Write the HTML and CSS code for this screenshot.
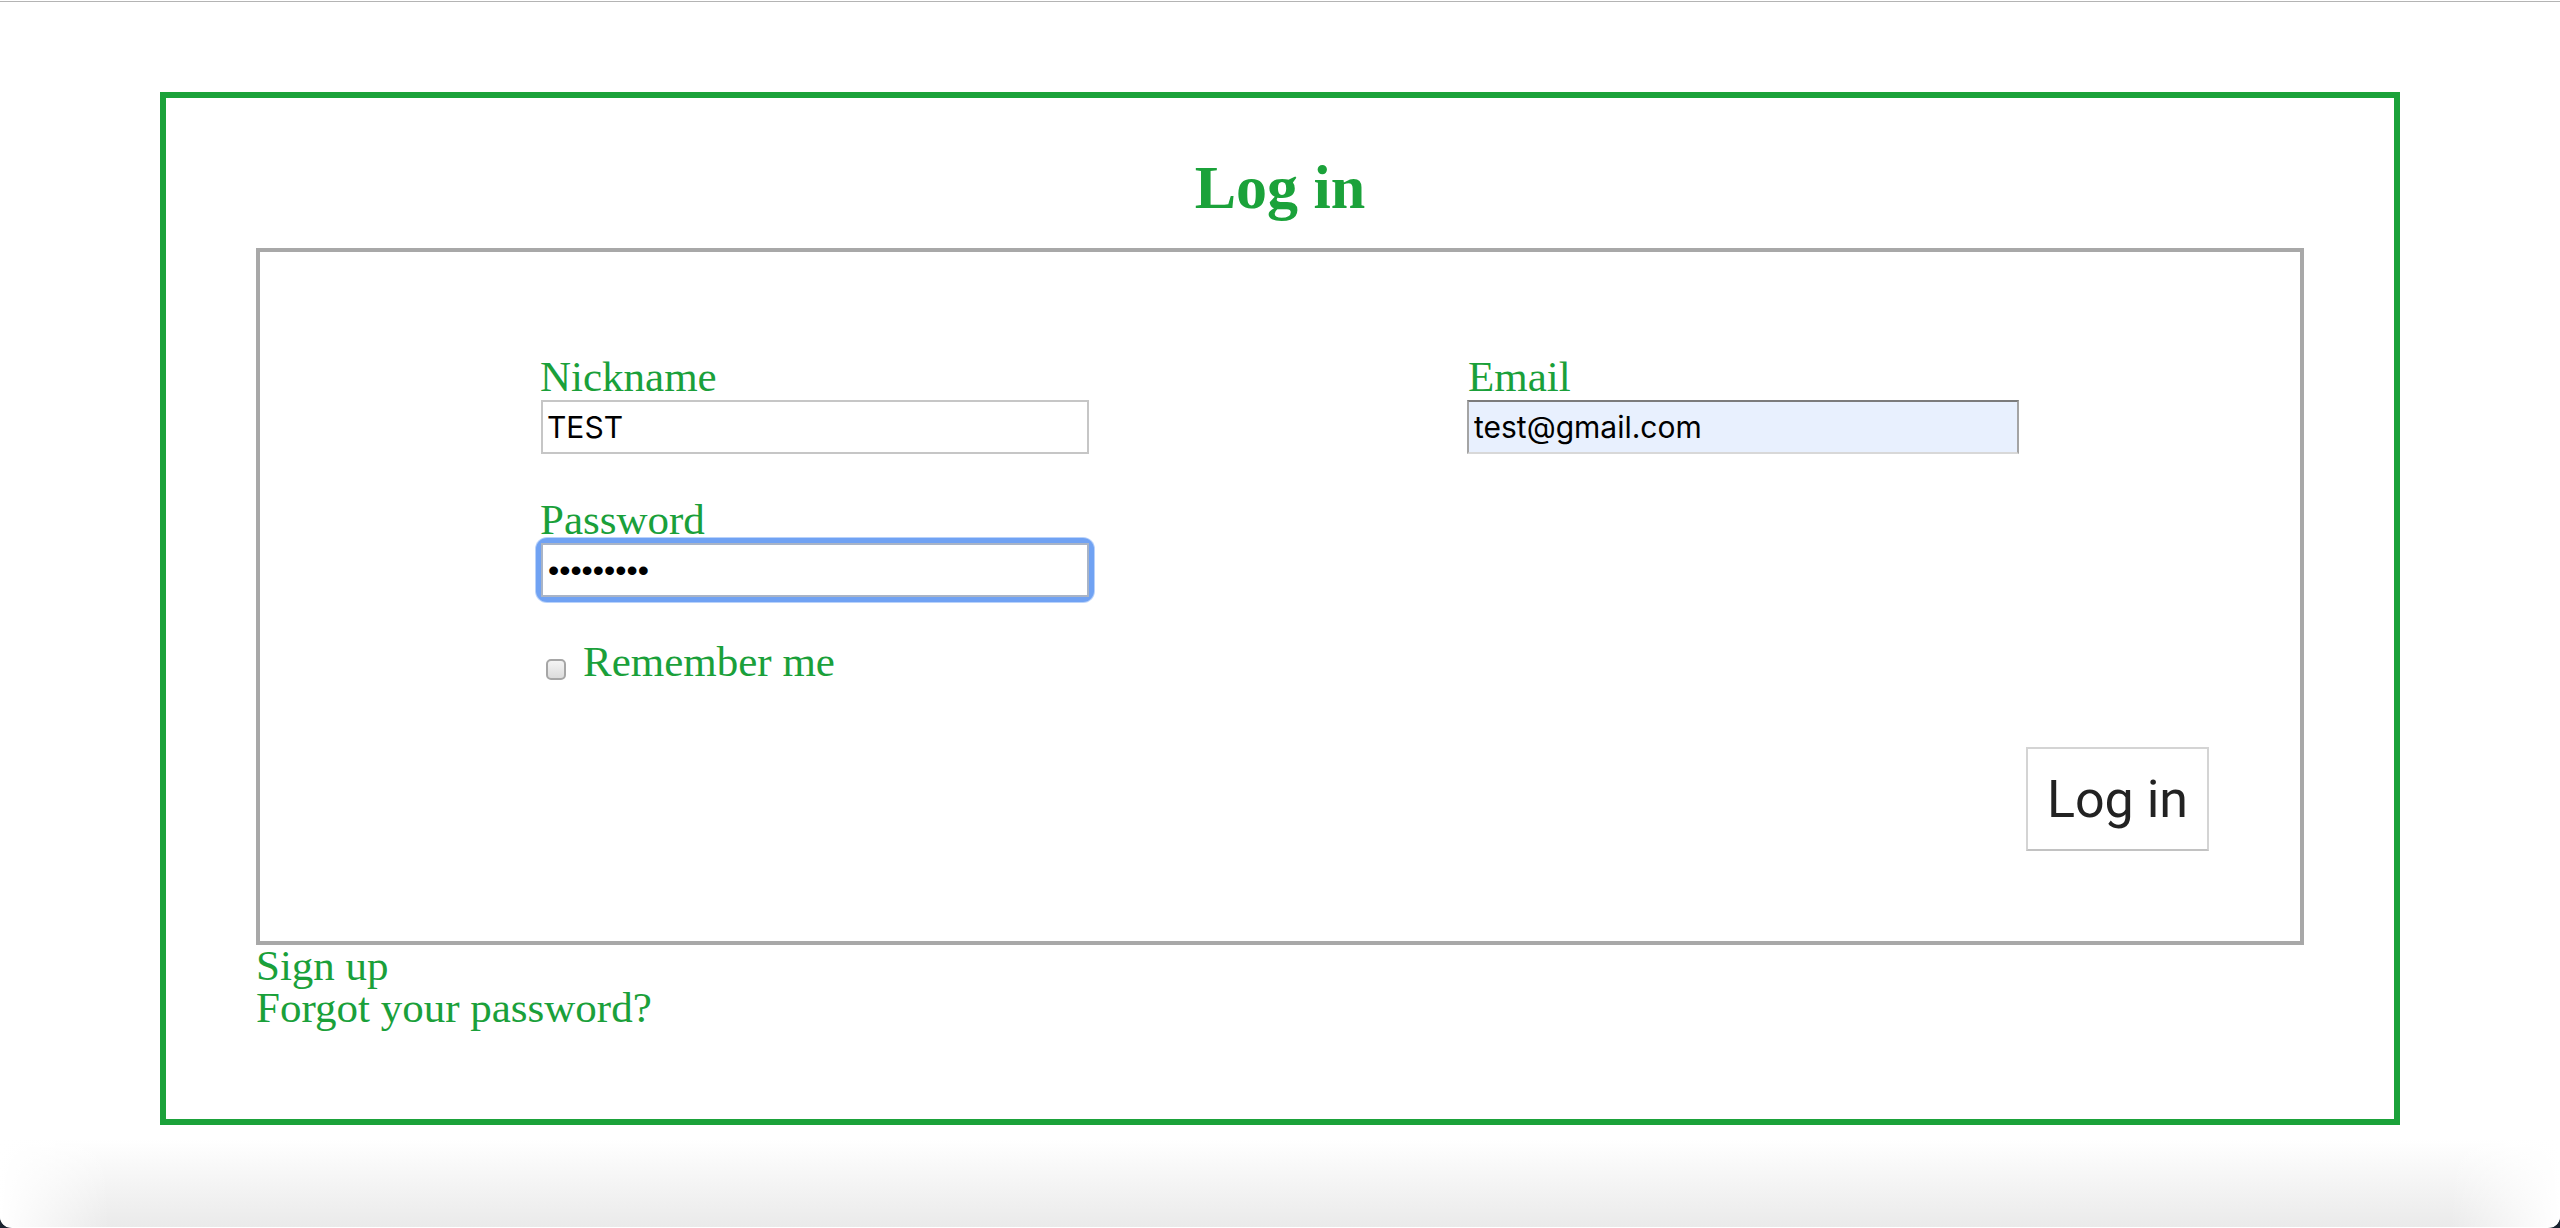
FILE: index.html
```html
<!DOCTYPE html>
<html lang="en">
<head>
<meta charset="utf-8">
<title>Log in</title>
<link rel="stylesheet" href="styles.css">
</head>
<body>
<div class="topline"></div>
<div class="frame">
  <h1 class="title">Log in</h1>
  <form class="panel">
    <div class="fields">
      <div class="col col-left">
        <label class="label" for="nick">Nickname</label>
        <input class="input" id="nick" type="text" value="TEST">
        <label class="label label-gap" for="pass">Password</label>
        <span class="focus-ring"><input class="input input-focus" id="pass" type="password" value="123456789"></span>
        <div class="remember">
          <span class="checkbox"></span>
          <span class="remember-text">Remember me</span>
        </div>
      </div>
      <div class="col col-right">
        <label class="label" for="mail">Email</label>
        <input class="input input-autofill" id="mail" type="text" value="test@gmail.com">
      </div>
    </div>
    <div class="actions">
      <button class="btn" type="button">Log in</button>
    </div>
  </form>
  <div class="links">
    <a class="link" href="#">Sign up</a>
    <a class="link" href="#">Forgot your password?</a>
  </div>
</div>
<div class="shade"></div>
</body>
</html>
```

FILE: styles.css
```css
html {
  background: #1b2430;
}
body {
  margin: 0;
  height: 1228px;
  background: #ffffff;
  overflow: hidden;
  border-radius: 0 0 12px 12px;
  font-family: "Liberation Serif", "Times New Roman", serif;
  color: #1aa03a;
}
.topline {
  height: 1px;
  margin-top: 1px;
  background: #b4b4b4;
}
.frame {
  margin: 90px 160px 0;
  border: 6px solid #1ba23a;
  padding: 52px 90px 90px;
}
.title {
  margin: 0 0 24px;
  text-align: center;
  font-size: 62px;
  line-height: 74px;
  font-weight: bold;
  color: #1ba23a;
}
.panel {
  display: block;
  margin: 0;
  border: 4px solid #a8a8a8;
  padding: 101px 91px 90px 280px;
}
.fields {
  display: flex;
}
.col {
  display: flex;
  flex-direction: column;
  align-items: flex-start;
}
.col-left {
  width: 928px;
  flex: none;
}
.col-right {
  flex: 1;
}
.label {
  display: block;
  font-size: 43px;
  line-height: 47px;
  color: #1aa03a;
}
.label-gap {
  margin-top: 42px;
}
.input {
  box-sizing: border-box;
  display: block;
  width: 548px;
  height: 54px;
  margin: 0;
  padding: 0 6px 0 4px;
  border: 2px solid #c6c6c6;
  background: #ffffff;
  font-family: Inter, "Liberation Sans", sans-serif;
  font-size: 30px;
  color: #000000;
  outline: none;
}
.col-left > .input {
  margin-left: 1px;
}
.focus-ring {
  display: block;
  margin-left: 1px;
  border-radius: 6px;
  box-shadow: 0 0 0 5px #70a2f3, 0 0 0 6px #b9d2fa;
}
.input-focus {
  border-color: #a9b4c6;
  font-family: "Liberation Sans", Arial, sans-serif;
  font-size: 32px;
  padding-left: 5px;
}
.input-autofill {
  width: 552px;
  margin-left: -1px;
  background: #e8f0fe;
  border-top-color: #7c7c7c;
  border-left-color: #a4a4a4;
  border-right-color: #a4a4a4;
  border-bottom-color: #d8d8d8;
  padding-left: 5px;
}
.remember {
  display: flex;
  align-items: flex-start;
  margin-top: 41px;
}
.checkbox {
  box-sizing: border-box;
  width: 20px;
  height: 21px;
  margin: 21px 17px 0 6px;
  border: 2px solid #a6a6a6;
  border-radius: 5px;
  background: linear-gradient(#f4f4f4, #dcdcdc);
}
.remember-text {
  font-size: 43px;
  line-height: 47px;
}
.actions {
  display: flex;
  justify-content: flex-end;
  margin-top: 62px;
}
.btn {
  box-sizing: border-box;
  width: 183px;
  height: 104px;
  padding: 0;
  border: 2px solid #d4d4d4;
  border-bottom-color: #c2c2c2;
  border-radius: 0;
  background: #ffffff;
  font-family: Roboto, "Liberation Sans", sans-serif;
  font-size: 52px;
  color: #222222;
}
.links {
  display: flex;
  flex-direction: column;
  align-items: flex-start;
}
.link {
  font-size: 43px;
  line-height: 42px;
  color: #1aa03a;
  text-decoration: none;
}
.shade {
  height: 88px;
  margin-top: 14px;
  background:
    linear-gradient(to right, #ffffff 0, rgba(255,255,255,0) 110px, rgba(255,255,255,0) calc(100% - 110px), #ffffff 100%),
    linear-gradient(to bottom, #ffffff, #eaeaea);
}
```
